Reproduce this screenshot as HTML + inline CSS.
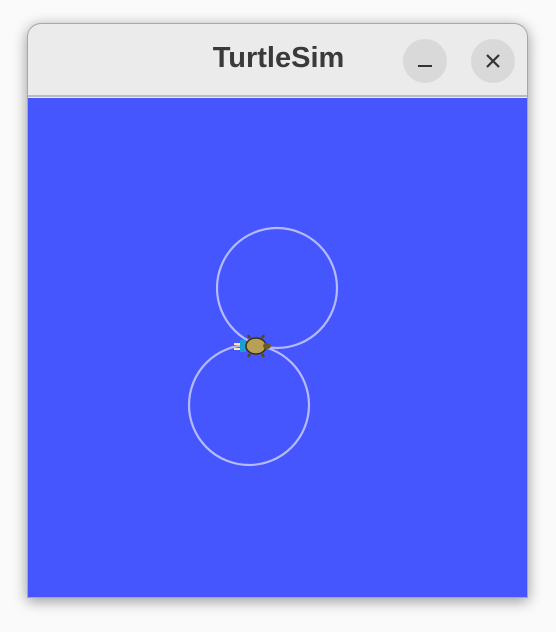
<!DOCTYPE html>
<html><head><style>
html,body{margin:0;padding:0;width:556px;height:632px;background:#fafafa;overflow:hidden}
.win{position:absolute;left:27px;top:23px;width:501px;height:575px;border-radius:14px 14px 0 0;background:#ebebeb;box-shadow:0 3px 14px rgba(0,0,0,.4);border:1px solid #a8a8a8;box-sizing:border-box;overflow:hidden}
.title{position:absolute;left:0;right:0;top:0;height:73px;border-bottom:2px solid #bcbcbc;box-sizing:border-box}
.t{position:absolute;left:0;width:501px;top:18px;text-align:center;font:bold 29px "Liberation Sans",sans-serif;color:#3a3a3a;letter-spacing:0px}
.b{position:absolute;top:15px;width:44px;height:44px;border-radius:50%;background:#d9d9d9}
.canvas{position:absolute;left:0;top:74px;width:501px;height:501px;background:#4556ff}
</style></head><body>
<div class="win">
<div class="title"><div class="t">TurtleSim</div>
<div class="b" style="left:375px"><div style="position:absolute;left:15px;top:26px;width:14px;height:2px;background:#333"></div></div>
<div class="b" style="left:443px"><svg width="44" height="44"><path d="M16 16L28 28M28 16L16 28" stroke="#333" stroke-width="2.2"/></svg></div>
</div>
<div class="canvas">
<svg width="501" height="501" style="position:absolute;left:-27px;top:-97px;overflow:visible">
<circle cx="276" cy="287" r="60" fill="none" stroke="#b5baff" stroke-width="2.2"/>
<circle cx="248" cy="404" r="60" fill="none" stroke="#b5baff" stroke-width="2.2"/>
<g transform="translate(253,345)">
<path d="M-20 -2h8M-20 3h8" stroke="#ffe7b0" stroke-width="2"/>
<rect x="-14" y="-6" width="6" height="12" fill="#1a9ed6"/>
<ellipse cx="2" cy="0" rx="10" ry="8" fill="#b8a055" stroke="#3a3010" stroke-width="1.5"/>
<ellipse cx="13" cy="0" rx="4" ry="3" fill="#6a5a20"/>
<path d="M-4 -8l-2-3M8 -8l2-3M-4 8l-2 3M8 8l2 3" stroke="#5a4a10" stroke-width="2.5"/>
</g>
</svg>
</div>
</div>
</body></html>
